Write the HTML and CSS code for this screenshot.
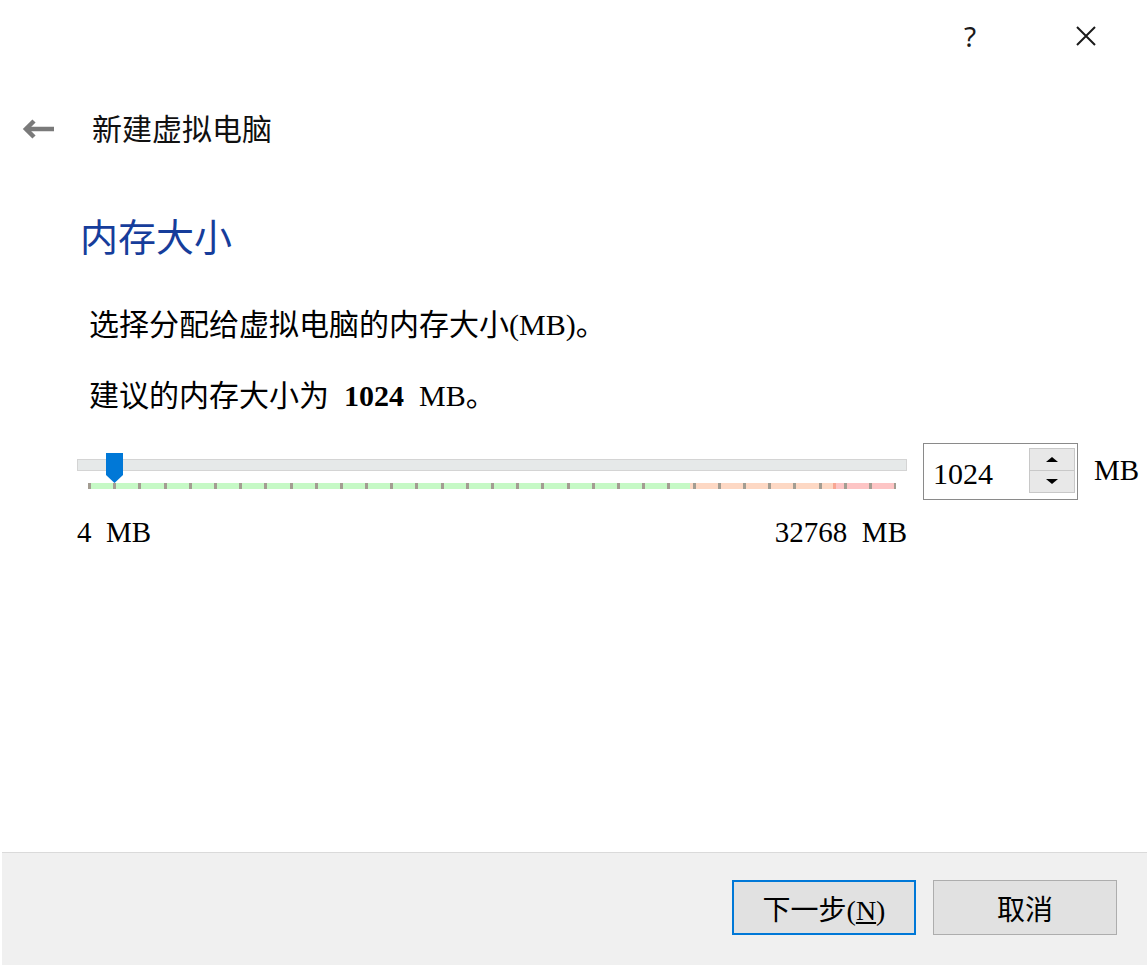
FILE: index.html
```html
<!DOCTYPE html>
<html lang="zh-CN">
<head>
    <meta charset="UTF-8">
    <title>新建虚拟电脑</title>
    <link rel="stylesheet" href="styles.css">
</head>
<body>
    <div class="dialog">
        <div class="titlebar">
            <span class="help-btn">?</span>
            <span class="close-btn">
                <svg width="20" height="20" viewBox="0 0 20 20">
                    <path d="M1 1 L19 19 M19 1 L1 19" stroke="#1a1a1a" stroke-width="2" fill="none"/>
                </svg>
            </span>
        </div>

        <div class="header">
            <svg class="back-icon" width="32" height="20" viewBox="0 0 32 20">
                <path d="M4 10 H32" stroke="#7a7a7a" stroke-width="4.5" fill="none"/>
                <path d="M12 2 L4 10 L12 18" stroke="#7a7a7a" stroke-width="4.5" fill="none"/>
            </svg>
            <span class="header-title">新建虚拟电脑</span>
        </div>

        <div class="page">
            <h1 class="page-title">内存大小</h1>
            <p class="desc">选择分配给虚拟电脑的内存大小(MB)。</p>
            <p class="desc desc-second">建议的内存大小为 <b>1024</b> MB。</p>

            <div class="memory-row">
                <div class="slider">
                    <div class="track">
                        <div class="handle"></div>
                    </div>
                    <div class="ticks"></div>
                    <div class="scale">
                        <span>4 MB</span>
                        <span>32768 MB</span>
                    </div>
                </div>
                <div class="spinbox">
                    <span class="spin-value">1024</span>
                    <div class="spin-buttons">
                        <div class="spin-btn spin-up"></div>
                        <div class="spin-btn spin-down"></div>
                    </div>
                </div>
                <span class="unit">MB</span>
            </div>
        </div>

        <div class="footer">
            <button class="btn btn-default">下一步(<u>N</u>)</button>
            <button class="btn">取消</button>
        </div>
    </div>
</body>
</html>
```

FILE: styles.css
```css
* {
    margin: 0;
    padding: 0;
    box-sizing: border-box;
}

body {
    font-family: 'Liberation Serif', 'Noto Sans CJK SC', serif;
    color: #000;
    background: #fff;
}

.dialog {
    width: 1147px;
    height: 965px;
    display: flex;
    flex-direction: column;
    background: #fff;
    overflow: hidden;
}

/* 标题栏 */
.titlebar {
    height: 72px;
    display: flex;
    justify-content: flex-end;
    align-items: center;
    padding-right: 31px;
    gap: 56px;
}

.help-btn {
    width: 60px;
    text-align: center;
    font-family: 'Noto Sans', sans-serif;
    font-size: 28px;
    line-height: 30px;
    color: #1a1a1a;
}

.close-btn {
    width: 60px;
    display: flex;
    justify-content: center;
}

.header {
    margin-top: 26px;
    height: 58px;
    display: flex;
    align-items: center;
    padding-left: 22px;
    gap: 38px;
}

.back-icon {
    margin-top: 4px;
}

.header-title {
    font-family: 'Noto Sans CJK SC', sans-serif;
    font-size: 30px;
    color: #111;
}

/* 内容区 */
.page {
    padding-left: 77px;
}

.page-title {
    margin-top: 54px;
    margin-left: 3px;
    font-family: 'Noto Sans CJK SC', serif;
    font-weight: normal;
    font-size: 38px;
    line-height: 50px;
    color: #163d9b;
}

.desc {
    margin-top: 45px;
    margin-left: 12px;
    font-size: 30px;
    line-height: 40px;
    word-spacing: 0.25em;
}

.desc-second {
    margin-top: 31px;
}

.memory-row {
    margin-top: 27px;
    display: flex;
    align-items: flex-start;
}

.slider {
    width: 830px;
    padding-top: 16px;
}

.track {
    position: relative;
    height: 12px;
    background: #e6e9e9;
    border: 1px solid #d4d4d4;
}

.handle {
    position: absolute;
    left: 28px;
    top: -7px;
    width: 17px;
    height: 30px;
    background: #0078d7;
    clip-path: polygon(0 0, 100% 0, 100% 73%, 50% 100%, 0 73%);
}

.ticks {
    margin-top: 12px;
    margin-left: 11px;
    width: 808px;
    height: 6px;
    background:
        repeating-linear-gradient(to right, #a39d92 0 3px, transparent 3px 25.19px),
        linear-gradient(to right, #c6f9c6 0 602px, #fdd8c4 602px 745px, #f8a793 745px 748px, #fdc5c5 748px);
}

.scale {
    margin-top: 28px;
    display: flex;
    justify-content: space-between;
    font-size: 29px;
    line-height: 30px;
    word-spacing: 0.25em;
}

.spinbox {
    margin-left: 16px;
    width: 155px;
    height: 57px;
    border: 1px solid #8a8a8a;
    display: flex;
    align-items: flex-start;
    justify-content: space-between;
    padding: 4px 2px 0 9px;
}

.spin-value {
    font-size: 30px;
    line-height: 52px;
}

.spin-buttons {
    width: 46px;
    height: 45px;
    display: flex;
    flex-direction: column;
    border: 1px solid #c8c8c8;
    background: #e8e8e8;
}

.spin-btn {
    flex: 1;
    display: flex;
    justify-content: center;
    align-items: center;
}

.spin-up {
    border-bottom: 1px solid #c8c8c8;
}

.spin-btn::after {
    content: '';
    border-left: 6px solid transparent;
    border-right: 6px solid transparent;
}

.spin-up::after { border-bottom: 5px solid #000; }
.spin-down::after { border-top: 5px solid #000; }

.unit {
    margin-left: 16px;
    font-size: 29px;
    line-height: 57px;
    margin-top: -1px;
}

/* 底部按钮栏 */
.footer {
    margin-top: auto;
    margin-left: 2px;
    height: 113px;
    background: #f0f0f0;
    border-top: 1px solid #dadada;
    display: flex;
    justify-content: flex-end;
    align-items: flex-start;
    padding: 27px 30px 0 0;
    gap: 17px;
}

.btn {
    width: 184px;
    height: 55px;
    background: #e1e1e1;
    border: 1px solid #adadad;
    font-family: 'Liberation Serif', 'Noto Sans CJK SC', serif;
    font-size: 28px;
    color: #000;
}

.btn-default {
    border: 2px solid #0078d7;
}
```
